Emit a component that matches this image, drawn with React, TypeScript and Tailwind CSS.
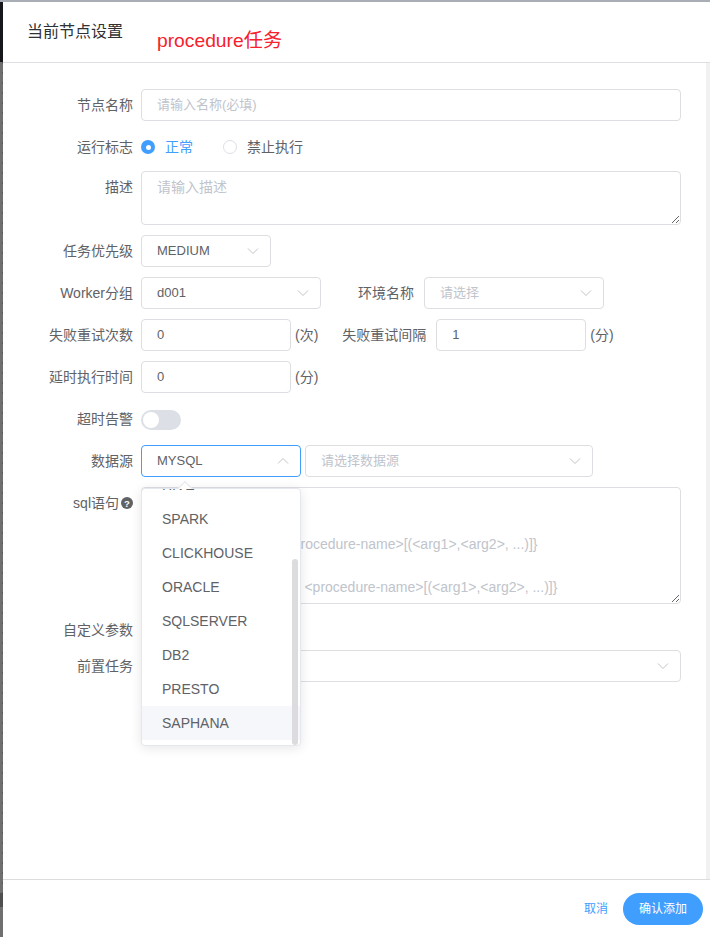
import React from "react";

const font = "font-['Liberation_Sans','Noto_Sans_CJK_SC',sans-serif]";

const Chevron = ({ up = false }: { up?: boolean }) => (
  <svg
    width="14"
    height="14"
    viewBox="0 0 14 14"
    fill="none"
    stroke="#c0c4cc"
    strokeWidth="1"
    className={up ? "rotate-180" : ""}
  >
    <path d="M2 4.5 L7 9.5 L12 4.5" />
  </svg>
);

const Label = ({ children, w = "w-[130px]" }: { children: React.ReactNode; w?: string }) => (
  <div className={`${w} shrink-0 text-right text-sm leading-8 text-[#606266]`}>{children}</div>
);

const Select = ({
  value,
  placeholder,
  className,
  open = false,
}: {
  value?: string;
  placeholder?: string;
  className: string;
  open?: boolean;
}) => (
  <div
    className={`${className} flex h-8 items-center justify-between rounded border pl-[15px] pr-[10px] text-[13px] ${
      open ? "border-[#409eff]" : "border-[#dcdee2]"
    }`}
  >
    {value ? (
      <span className="text-[#606266]">{value}</span>
    ) : (
      <span className="text-[#c0c4cc]">{placeholder}</span>
    )}
    <Chevron up={open} />
  </div>
);

const NumberBox = ({ value }: { value: string }) => (
  <div className="flex h-8 w-[150px] shrink-0 items-center rounded border border-[#dcdee2] pl-[15px] text-[13px] text-[#606266]">
    {value}
  </div>
);

const Unit = ({ children }: { children: React.ReactNode }) => (
  <span className="ml-1 text-sm text-[#606266]">{children}</span>
);

const sqlPlaceholder = `请输入存储脚本

调用存储过程：{call <procedure-name>[(<arg1>,<arg2>, ...)]}

调用存储函数：{?= call <procedure-name>[(<arg1>,<arg2>, ...)]}`;

const dbTypes = ["HIVE", "SPARK", "CLICKHOUSE", "ORACLE", "SQLSERVER", "DB2", "PRESTO", "SAPHANA"];

const Dropdown = () => (
  <div className="absolute left-[138px] top-[43px] z-10 h-[258px] w-40 rounded border border-[#e4e7ed] bg-white shadow-[0_2px_12px_rgba(0,0,0,0.1)]">
    <div className="absolute -top-[6px] left-[38px] size-[10px] rotate-45 border-l border-t border-[#e4e7ed] bg-white" />
    <div className="relative h-full overflow-hidden rounded">
      <div className="-mt-[21px]">
        {dbTypes.map((name) => (
          <div
            key={name}
            className={`h-[34px] pl-5 text-sm leading-[34px] text-[#606266] ${
              name === "SAPHANA" ? "bg-[#f5f7fa]" : ""
            }`}
          >
            {name}
          </div>
        ))}
      </div>
      <div className="absolute right-[2px] top-[70px] h-[186px] w-[6px] rounded-full bg-[#dcdcde]" />
    </div>
  </div>
);

export default function App() {
  return (
    <div className={`${font} relative flex h-[937px] w-[710px] flex-col overflow-hidden bg-white`}>
      <div className="h-[2px] shrink-0 bg-[#a9adb5]" />
      <div className="flex min-h-0 flex-1">
        <div className="flex w-[3px] shrink-0 flex-col">
          <div className="h-[60px] bg-[#16171b]" />
          <div className="flex-1 bg-[#6f6f6f] bg-[linear-gradient(#444_1px,transparent_1px)] bg-[length:1px_10px] bg-right bg-repeat-y" />
          <div className="h-[14px] bg-[#4f4f4f]" />
          <div className="h-[30px] bg-[#6f6f6f]" />
        </div>
        <div className="flex min-w-0 flex-1 flex-col">
          {/* header */}
          <div className="relative h-[61px] shrink-0 border-b border-[#dcdee2]">
            <div className="absolute left-[24px] top-[18px] text-base leading-6 text-[#303133]">当前节点设置</div>
            <div className="absolute left-[154px] top-[25px] text-[19.25px] leading-7 text-[#f5222d]">procedure任务</div>
          </div>

          {/* form */}
          <div className="flex min-h-0 flex-1">
            <div className="min-w-0 flex-1 pt-[26px]">
              <div className="flex flex-col gap-[10px]">
                <div className="flex gap-2">
                  <Label>节点名称</Label>
                  <div className="flex h-8 w-[540px] items-center rounded border border-[#dcdee2] pl-[15px] text-[13px] text-[#c0c4cc]">
                    请输入名称(必填)
                  </div>
                </div>

                <div className="flex h-[40px] -my-[5px] items-center gap-2 pt-[2px]">
                  <Label>运行标志</Label>
                  <div className="flex items-center text-sm">
                    <span className="flex size-[14px] items-center justify-center rounded-full bg-[#409eff]">
                      <span className="size-[5px] rounded-full bg-white" />
                    </span>
                    <span className="ml-[10px] text-[#409eff]">正常</span>
                    <span className="ml-[30px] size-[14px] rounded-full border border-[#dcdfe6]" />
                    <span className="ml-[10px] text-[#606266]">禁止执行</span>
                  </div>
                </div>

                <div className="flex gap-2">
                  <Label>描述</Label>
                  <textarea
                    readOnly
                    placeholder="请输入描述"
                    className="h-[54px] w-[540px] resize-y rounded border border-[#dcdee2] px-[15px] py-[5px] text-sm leading-[21.5px] outline-none placeholder:text-[#c0c4cc]"
                  />
                </div>

                <div className="flex gap-2">
                  <Label>任务优先级</Label>
                  <Select value="MEDIUM" className="w-[130px]" />
                </div>

                <div className="flex gap-2">
                  <Label>Worker分组</Label>
                  <Select value="d001" className="w-[180px]" />
                  <Label w="ml-[29px] w-[56px]">环境名称</Label>
                  <Select placeholder="请选择" className="ml-[2px] w-[180px]" />
                </div>

                <div className="flex items-center gap-2">
                  <Label>失败重试次数</Label>
                  <div className="flex items-center">
                    <NumberBox value="0" />
                    <Unit>(次)</Unit>
                  </div>
                  <Label w="ml-[16px] w-[84px]">失败重试间隔</Label>
                  <div className="ml-[2px] flex items-center">
                    <NumberBox value="1" />
                    <Unit>(分)</Unit>
                  </div>
                </div>

                <div className="flex items-center gap-2">
                  <Label>延时执行时间</Label>
                  <div className="flex items-center">
                    <NumberBox value="0" />
                    <Unit>(分)</Unit>
                  </div>
                </div>

                <div className="flex h-8 items-center gap-2">
                  <Label>超时告警</Label>
                  <div className="relative mt-px h-5 w-10 rounded-full bg-[#dcdfe6]">
                    <div className="absolute left-[2px] top-[2px] size-4 rounded-full bg-white" />
                  </div>
                </div>

                <div className="relative flex gap-1">
                  <div className="flex gap-2">
                    <Label>数据源</Label>
                    <Select value="MYSQL" open className="w-40" />
                  </div>
                  <Select placeholder="请选择数据源" className="w-[288px]" />
                  <Dropdown />
                </div>

                <div className="flex gap-2">
                  <Label>
                    <span className="inline-flex items-center">
                      sql语句
                      <svg width="12" height="12" viewBox="0 0 12 12" className="ml-[2px]">
                        <circle cx="6" cy="6" r="6" fill="#606266" />
                        <text x="6" y="9.5" textAnchor="middle" fontSize="9.5" fontWeight="bold" fill="#fff">
                          ?
                        </text>
                      </svg>
                    </span>
                  </Label>
                  <textarea
                    readOnly
                    placeholder={sqlPlaceholder}
                    className="h-[117px] w-[540px] resize-y overflow-hidden rounded border border-[#dcdee2] px-[15px] py-[3px] text-sm leading-[21.5px] outline-none placeholder:text-[#c0c4cc]"
                  />
                </div>

                <div className="flex h-[26px] gap-2">
                  <Label>自定义参数</Label>
                </div>

                <div className="flex gap-2">
                  <Label>前置任务</Label>
                  <Select className="w-[540px]" placeholder=" " />
                </div>
              </div>
            </div>
            <div className="w-1 shrink-0 bg-[#f1f1f1]" />
          </div>

          {/* footer */}
          <div className="flex h-[58px] shrink-0 items-center justify-end border-t border-[#dcdcdc] pr-[7px]">
            <span className="mr-[15px] text-xs text-[#409eff]">取消</span>
            <div className="flex h-8 w-20 items-center justify-center rounded-full bg-[#409eff] text-xs text-white">
              确认添加
            </div>
          </div>
        </div>
      </div>
    </div>
  );
}
